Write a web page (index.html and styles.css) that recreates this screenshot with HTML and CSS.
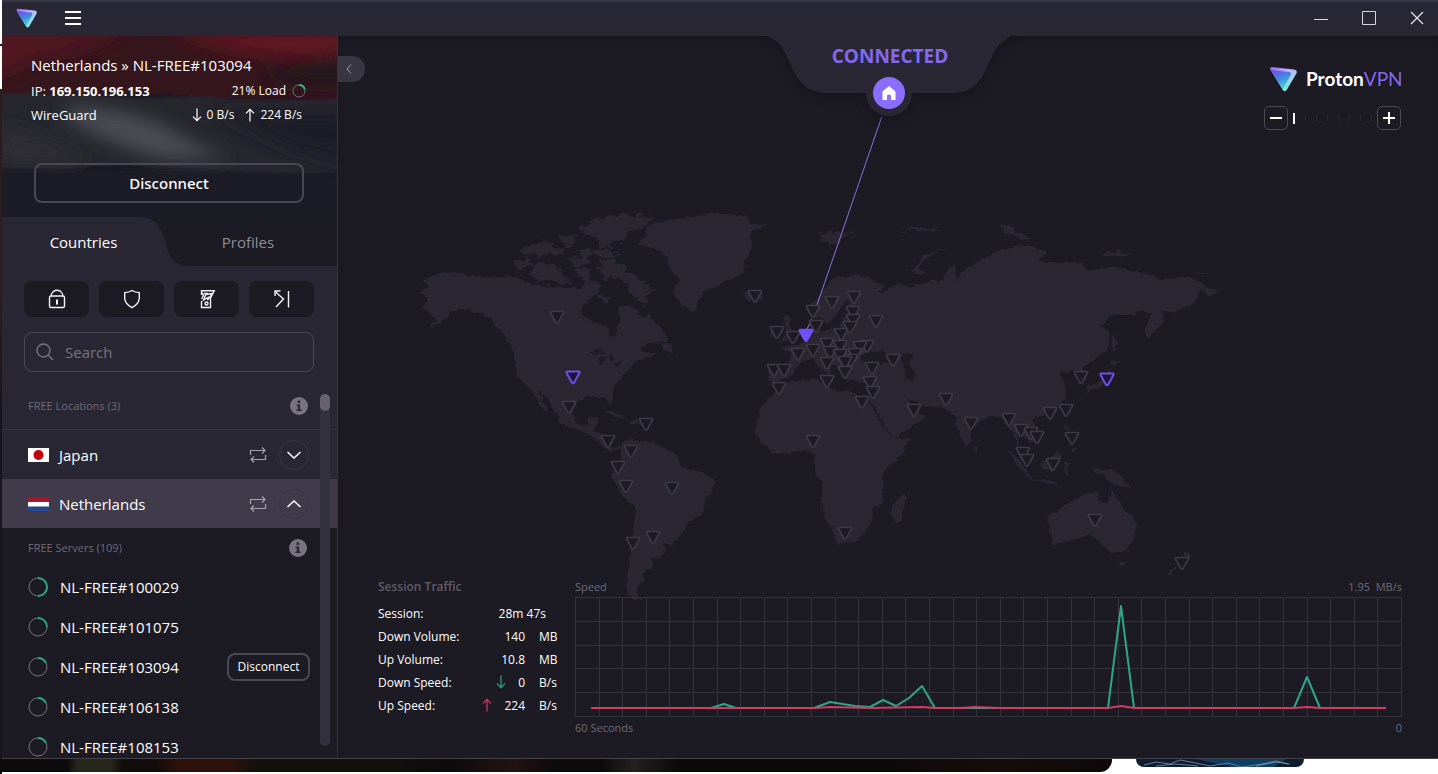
FILE: index.html
```html
<!DOCTYPE html>
<html lang="en">
<head>
<meta charset="utf-8">
<title>Proton VPN</title>
<meta name="viewport" content="width=device-width, initial-scale=1">
<link rel="stylesheet" href="styles.css">
</head>
<body>
<svg class="defs" aria-hidden="true">
  <defs>
    <linearGradient id="brandEdge" x1="0" y1="0" x2="0.6" y2="1">
      <stop offset="0" stop-color="#8a62f2"/><stop offset="0.4" stop-color="#c3b2ff"/><stop offset="1" stop-color="#7df0d8"/>
    </linearGradient>
    <linearGradient id="brandFace" x1="0.2" y1="0" x2="0.6" y2="1">
      <stop offset="0" stop-color="#6a50e8"/><stop offset="0.5" stop-color="#3f8fe0"/><stop offset="1" stop-color="#4fe0cc"/>
    </linearGradient>
    <filter id="soften" x="-20%" y="-20%" width="140%" height="140%"><feGaussianBlur stdDeviation="9"/></filter>
    <filter id="edge"><feGaussianBlur stdDeviation="1"/></filter>
    <filter id="coast" x="-5%" y="-5%" width="110%" height="110%">
      <feTurbulence type="fractalNoise" baseFrequency="0.14" numOctaves="2" seed="4" result="n"/>
      <feDisplacementMap in="SourceGraphic" in2="n" scale="5" xChannelSelector="R" yChannelSelector="G"/>
    </filter>
    <filter id="isles" x="-10%" y="-10%" width="120%" height="120%">
      <feTurbulence type="fractalNoise" baseFrequency="0.11 0.2" numOctaves="2" seed="9" result="n"/>
      <feDisplacementMap in="SourceGraphic" in2="n" scale="14" xChannelSelector="R" yChannelSelector="G"/>
    </filter>
  </defs>
  <symbol id="mark" viewBox="0 0 28 26">
    <path d="M2 1 L24 3.4 Q28 4 26.4 7.4 L17 23.6 Q14.6 27 12.6 23.4 L.6 4 Q-.6 1 2 1Z" fill="url(#brandEdge)"/>
    <path d="M1 4 L19 6 Q22 6.6 20.6 9 L13.4 22.6 Q13 24 12.6 23.4Z" fill="url(#brandFace)"/>
  </symbol>
  <symbol id="swap" viewBox="0 0 18 16">
    <path d="M1.5 8V3.5H16M13 .5l3 3-3 3M16.5 8v4.500H2M5 9.500l-3 3 3 3" fill="none" stroke="currentColor" stroke-width="1.2"/>
  </symbol>
  <symbol id="info" viewBox="0 0 18 18">
    <circle cx="9" cy="9" r="9" fill="#77747f"/>
    <path d="M7.600 3.600h2.600v2.400H7.600zM6.600 7.400h3.600v5h1.400v1.600H6.400v-1.600h1.400V9H6.600z" fill="#292733"/>
  </symbol>
  <symbol id="down" viewBox="0 0 10 14"><path d="M5 .5v12M1 8.700l4 4 4-4" fill="none" stroke="currentColor" stroke-width="1.200"/></symbol>
  <symbol id="up" viewBox="0 0 10 14"><path d="M5 13.500v-12M1 5.300l4-4 4 4" fill="none" stroke="currentColor" stroke-width="1.200"/></symbol>
  <symbol id="pin" viewBox="-9 -9 18 18" overflow="visible">
    <path d="M-5.800 -5.500H5.800Q7 -5.300 6.400 -4L1.200 5.400Q0 7 -1.200 5.400L-6.400 -4Q-7 -5.300 -5.800 -5.500Z"/>
  </symbol>
</svg>

<div class="desktop">
  <div class="window">
    <header class="titlebar">
      <svg class="app-icon" viewBox="0 0 28 26" aria-hidden="true"><use href="#mark"/></svg>
      <button class="menu" aria-label="Menu"><svg viewBox="0 0 16 14"><path d="M0 1h16M0 7h16M0 13h16" stroke="#fff" stroke-width="2"/></svg></button>
      <div class="window-buttons">
        <button aria-label="Minimize"><svg viewBox="0 0 14 14"><path d="M0 8.500h14" stroke="#d8d7dc"/></svg></button>
        <button aria-label="Maximize"><svg viewBox="0 0 14 14"><path d="M.5 .5h13v13h-13z" fill="none" stroke="#d8d7dc"/></svg></button>
        <button aria-label="Close"><svg viewBox="0 0 14 14"><path d="M1 1l12 12M13 1L1 13" stroke="#e8e7ec" stroke-width="1.200"/></svg></button>
      </div>
    </header>

    <div class="content">
      <aside class="sidebar">
        <section class="connection">
          <svg class="flag-art" viewBox="0 0 335 180" preserveAspectRatio="none" aria-hidden="true">
            <rect width="335" height="180" fill="#1c1a24"/>
            <g filter="url(#edge)">
              <path d="M-5 -5H340V62Q270 66 200 60T90 60T-5 58Z" fill="#35151e"/>
              <path d="M-5 58Q40 56 90 60T200 60Q270 66 340 62V136Q250 138 180 131T60 133T-5 130Z" fill="#26262e"/>
              <path d="M-5 130Q40 132 60 133T180 131Q250 138 340 136V185H-5Z" fill="#1b1a25"/>
            </g>
            <g filter="url(#soften)">
              <path d="M-10 -5H130L80 14L30 24L-10 44Z" fill="#521620"/>
              <path d="M160 -5H350V14Q280 26 220 12Z" fill="#651620"/>
              <path d="M260 30L350 20V50L280 48Z" fill="#24131c"/>
              <path d="M60 70Q110 68 160 88Q200 112 230 122H160Q100 105 70 85Z" fill="#4c4c53"/>
              <path d="M210 74L350 74V128L290 112Z" fill="#1f1e28"/>
              <path d="M-5 90L60 108L90 124L-5 124Z" fill="#2d2e35"/>
            </g>
          </svg>
          <div class="connection-body">
            <h1 class="server-name">Netherlands » NL-FREE#103094</h1>
            <div class="info-row"><p>IP: <b>169.150.196.153</b></p>
              <p class="load">21% Load <svg class="ring-small" viewBox="0 0 14 14" aria-hidden="true"><circle cx="7" cy="7" r="6"/><path d="M7 1A6 6 0 0 1 12.800 5.600"/></svg></p></div>
            <div class="info-row second"><p>WireGuard</p>
              <p class="rates"><svg class="arrow" aria-hidden="true"><use href="#down"/></svg><span>0 B/s</span><svg class="arrow" aria-hidden="true"><use href="#up"/></svg><span>224 B/s</span></p></div>
            <button class="disconnect">Disconnect</button>
          </div>
        </section>

        <nav class="tabs">
          <button class="tab active"><svg class="tab-shape" viewBox="0 0 185 49" preserveAspectRatio="none" aria-hidden="true"><path d="M0 0H138C154 0 160 12 163 24C166 38 172 49 185 49H0Z" fill="#292733"/></svg><span>Countries</span></button>
          <button class="tab"><span>Profiles</span></button>
        </nav>

        <div class="filters">
          <button aria-label="Secure Core"><svg viewBox="0 0 20 20"><path d="M4.200 7.500Q4.200 3.800 7 2Q10 .6 13 2Q15.800 3.800 15.800 7.500" /><rect x="2.500" y="7" width="15" height="11.500" rx="1.500"/><path d="M10 10.500v5" stroke-width="2"/></svg></button>
          <button aria-label="NetShield"><svg viewBox="0 0 20 20"><path d="M10 1.500Q13 3.500 17.300 3.600V9Q17 15 10 18.600Q3 15 2.700 9V3.600Q7 3.500 10 1.500Z"/></svg></button>
          <button aria-label="Kill Switch"><svg viewBox="0 0 20 20"><path d="M4.500 6V1.700H17.300L13.500 9V18.500H4.500V12M6.500 4.500H11M4.500 3.500L6.500 6.500L4.500 10"/><path d="M15.500 4.500L9 5.500L6.500 11L11 8.500L10.500 11L14.500 6Z"/><circle cx="9.500" cy="14.500" r="1.500"/></svg></button>
          <button aria-label="Port Forwarding"><svg viewBox="0 0 20 20"><path d="M3 2.500L11.500 10L4 18M3 7V2h5.500M16.500 2v16.500"/></svg></button>
        </div>

        <div class="search">
          <svg viewBox="0 0 18 18" aria-hidden="true"><circle cx="7.500" cy="7.500" r="6.500"/><path d="M12.300 12.300L17 17"/></svg>
          <input type="search" aria-label="Search" placeholder="Search">
        </div>

        <div class="list">
          <div class="list-heading locations"><span>FREE Locations (3)</span><button aria-label="About free locations"><svg><use href="#info"/></svg></button></div>
          <div class="country">
            <svg class="flag" viewBox="0 0 21 14" aria-hidden="true"><path d="M0 0h21v14H0z" fill="#fff"/><circle cx="10.500" cy="7" r="5" fill="#c4000c"/></svg>
            <span>Japan</span><svg class="swap" aria-hidden="true"><use href="#swap"/></svg>
            <button aria-label="Expand Japan"><svg viewBox="0 0 14 8"><path d="M.5 1l6.500 6 6.500-6"/></svg></button>
          </div>
          <div class="country selected">
            <svg class="flag" viewBox="0 0 21 14" aria-hidden="true"><path d="M0 0h21v5H0z" fill="#a8152c"/><path d="M0 5h21v5H0z" fill="#fff"/><path d="M0 9.500h21V14H0z" fill="#27468b"/></svg>
            <span>Netherlands</span><svg class="swap" aria-hidden="true"><use href="#swap"/></svg>
            <button aria-label="Collapse Netherlands"><svg viewBox="0 0 14 8"><path d="M.5 7l6.500-6 6.500 6"/></svg></button>
          </div>
          <div class="servers">
            <div class="list-heading"><span>FREE Servers (109)</span><button aria-label="About free servers"><svg><use href="#info"/></svg></button></div>
            <ul>
              <li><svg class="ring" viewBox="0 0 20 20" aria-hidden="true"><circle cx="10" cy="10" r="9"/><path d="M10 1A9 9 0 0 1 10 19"/></svg>NL-FREE#100029</li>
              <li><svg class="ring" viewBox="0 0 20 20" aria-hidden="true"><circle cx="10" cy="10" r="9"/><path d="M10 1A9 9 0 0 1 19 10"/></svg>NL-FREE#101075</li>
              <li><svg class="ring" viewBox="0 0 20 20" aria-hidden="true"><circle cx="10" cy="10" r="9"/><path d="M10 1A9 9 0 0 1 18 6"/></svg>NL-FREE#103094<button>Disconnect</button></li>
              <li><svg class="ring" viewBox="0 0 20 20" aria-hidden="true"><circle cx="10" cy="10" r="9"/><path d="M10 1A9 9 0 0 1 18 6"/></svg>NL-FREE#106138</li>
              <li><svg class="ring" viewBox="0 0 20 20" aria-hidden="true"><circle cx="10" cy="10" r="9"/><path d="M10 1A9 9 0 0 1 18 6"/></svg>NL-FREE#108153</li>
            </ul>
          </div>
          <div class="scrollbar" aria-hidden="true"><div class="thumb"></div></div>
        </div>
      </aside>

      <main class="stage">
        <svg class="map" viewBox="338 36 1100 722" preserveAspectRatio="xMidYMin meet" role="img" aria-label="World map of servers">
          <g class="land" filter="url(#coast)">
            <path d="M422 280L442 272L467 275L490 278L510 276L527 282L540 286L567 287L580 288L588 280L597 281L602 287L590 300L582 308L583 315L593 322L608 326L610 336L615 336L617 327L620 322L618 307L630 305L637 310L640 317L647 317L648 312L657 325L668 335L667 342L650 343L640 350L656 353L650 358L637 360L630 368L622 378L612 390L613 403L609 404L605 397L587 397L577 403L573 413L577 423L587 425L590 417L598 418L594 430L601 433L603 443L612 448L621 444L620 449L610 452L597 440L583 432L560 423L557 413L547 398L538 391L548 411L545 412L533 393L524 384L517 375L515 362L513 348L500 330L490 318L480 313L463 309L450 313L443 320L427 331L437 320L422 308L428 298L418 292L430 287Z"/>
            <path d="M637 243L647 237L645 227L667 220L693 217L713 213L747 216L750 223L767 224L750 232L752 247L745 260L743 273L730 280L720 285L703 292L693 312L680 303L673 290L680 280L672 272L667 257L657 250Z"/>
            <path d="M620 452L623 443L632 438L637 441L653 442L663 448L677 455L682 467L700 472L716 480L712 492L707 497L702 515L688 522L685 530L672 545L663 544L666 552L660 557L652 559L652 567L643 573L644 580L638 588L637 597L645 600L633 600L626 593L627 577L630 557L632 537L636 507L623 497L612 477L615 467L622 460Z"/>
            <path d="M770 398L778 387L790 382L818 378L823 385L840 392L847 390L857 395L868 400L873 408L883 427L893 438L910 438L903 452L883 473L883 485L884 502L873 508L872 520L865 532L855 542L837 544L832 530L826 522L821 502L823 487L814 467L815 453L805 450L777 455L760 442L755 432L757 418L760 407Z"/>
            <path d="M892 507L903 493L906 498L900 522L895 523L891 515Z"/>
            <path d="M807 310L818 297L833 278L857 275L873 280L885 287L877 292L885 292L897 283L910 287L930 280L943 280L947 268L955 265L957 283L961 272L970 268L977 262L997 252L1023 245L1048 252L1037 262L1060 262L1083 263L1088 270L1117 267L1153 275L1160 280L1190 277L1208 288L1218 291L1210 295L1200 290L1195 303L1173 312L1162 309L1164 320L1148 340L1144 328L1152 314L1143 310L1133 315L1113 315L1100 327L1107 330L1110 338L1107 350L1093 360L1083 368L1088 380L1082 380L1074 370L1060 373L1065 383L1066 398L1060 405L1047 415L1032 418L1038 432L1038 440L1030 442L1022 433L1018 433L1019 447L1026 455L1020 452L1015 437L1008 427L1000 417L992 415L978 423L972 430L970 442L967 447L958 432L955 417L947 408L923 406L907 397L915 413L928 415L913 427L893 438L883 423L873 403L870 400L868 392L870 385L860 381L847 379L843 377L837 367L829 363L832 376L824 373L813 360L805 360L797 367L790 377L773 382L768 379L768 367L787 365L793 353L780 348L802 343L812 335L812 324L818 330L840 328L843 317L862 311L848 309L849 299L842 306L833 320L827 325L820 317L810 318Z"/>
            <path d="M783 317L789 316L790 327L798 340L780 342L787 333ZM771 328L778 327L778 337L770 338ZM742 293L760 290L762 298L750 302Z"/>
            <path d="M912 270L923 255L947 248L930 256L918 267L927 275L914 274Z"/>
            <path d="M1112 333L1117 343L1113 354ZM1109 362L1120 360L1113 366ZM1109 370L1112 378L1103 385L1088 392L1087 387L1100 382ZM974 445L978 451L974 452Z"/>
            <path d="M1007 450L1017 457L1034 480L1027 477ZM1032 479L1047 481L1063 486L1045 484ZM1040 463L1050 458L1057 450L1062 457L1053 471L1043 469ZM1064 463L1072 463L1067 466L1070 476L1065 473ZM1065 424L1069 432L1064 430ZM1072 446L1078 449L1073 453ZM1088 467L1100 470L1113 470L1123 478L1132 488L1113 485L1102 475Z"/>
            <path d="M1048 517L1068 503L1087 493L1098 493L1098 500L1108 503L1112 490L1117 498L1123 507L1137 523L1135 537L1125 552L1110 552L1100 542L1090 535L1053 545L1050 530ZM1118 561L1126 562L1122 568ZM1185 552L1193 556L1180 564L1170 575L1167 573L1185 560Z"/>
            <path d="M605 412L615 412L627 420L615 417ZM630 420L638 419L641 424L631 424ZM663 344L668 342L675 353L663 350Z"/>
          </g>
          <g class="land" filter="url(#isles)">
            <path d="M578 230L590 224L600 219L627 214L653 217L650 225L630 233L617 243L600 248L597 238Z"/>
            <path d="M513 261L527 257L532 263L520 272ZM532 265L550 262L560 267L563 277L572 284L547 282L533 277ZM520 251L543 238L547 244L567 250L553 256L530 254ZM555 236L578 238L576 245L560 243ZM578 250L617 251L619 256L582 257ZM566 257L588 258L586 266L570 264ZM576 267L592 269L588 280L578 279Z"/>
            <path d="M597 266L613 260L630 272L647 283L656 290L647 297L645 306L633 297L630 287L620 277L606 279ZM597 295L613 298L603 302ZM596 258L614 259L606 264Z"/>
            <path d="M818 233L855 232L840 240L830 247ZM897 229L927 227L943 228L920 231ZM998 226L1010 226L1030 238L1017 238ZM1102 253L1117 250L1133 255L1110 258ZM1194 271L1204 271L1202 274Z"/>
          </g>
          <g class="water" filter="url(#coast)">
            <path d="M860 361L866 351L876 352L882 350L890 362L874 365ZM901 358L906 353L914 356L908 362L915 372L914 380L906 379L904 367ZM590 353L598 348L607 354ZM598 358L606 356L602 365L599 364ZM608 355L616 358L611 363ZM612 364L624 361L616 366Z"/>
          </g>
          <path class="link" d="M882 116L817 305M812 319L807 329"/>
          <g class="pins" id="pins"></g>
          <g class="pins free">
            <use href="#pin" x="564" y="368" width="18" height="18"/><use href="#pin" x="1098" y="370" width="18" height="18"/>
          </g>
          <g class="pins current"><use href="#pin" x="797" y="326" width="18" height="18"/></g>
        </svg>

        <div class="status">
          <svg class="status-shape" viewBox="0 0 244 80" aria-hidden="true"><path d="M0 0C14 7 16 15 23 29C31 48 40 57 60 57H98A23 23 0 0 0 144 57H184C203 57 212 48 220 29C227 15 229 7 244 0Z" fill="#292733"/><circle cx="121" cy="57" r="23" fill="#292733"/></svg>
          <p>CONNECTED</p>
          <button aria-label="Home"><svg viewBox="0 0 14 14"><path d="M7 0L13.500 5.500V14H9V9.500Q7 7.500 5 9.500V14H.5V5.500Z" fill="#fff"/></svg></button>
        </div>

        <button class="collapse" aria-label="Collapse sidebar"><svg viewBox="0 0 6 10"><path d="M5 .5L1 5l4 4.500"/></svg></button>

        <div class="tools">
          <div class="brand"><svg viewBox="0 0 28 26" aria-hidden="true"><use href="#mark"/></svg><span><b>Proton</b>VPN</span></div>
          <div class="zoom">
            <button aria-label="Zoom out"><svg viewBox="0 0 12 12"><path d="M0 6h12"/></svg></button>
            <input type="range" min="0" max="7" value="0" aria-label="Map zoom">
            <button aria-label="Zoom in"><svg viewBox="0 0 12 12"><path d="M0 6h12M6 0v12"/></svg></button>
          </div>
        </div>

        <section class="traffic">
          <div class="session">
            <h2>Session Traffic</h2>
            <table>
              <tr><th scope="row">Session:</th><td colspan="2" class="time">28m 47s</td></tr>
              <tr><th scope="row">Down Volume:</th><td>140</td><td class="unit">MB</td></tr>
              <tr><th scope="row">Up Volume:</th><td>10.8</td><td class="unit">MB</td></tr>
              <tr><th scope="row">Down Speed:</th><td><svg class="arrow green"><use href="#down"/></svg>0</td><td class="unit">B/s</td></tr>
              <tr><th scope="row">Up Speed:</th><td><svg class="arrow red"><use href="#up"/></svg>224</td><td class="unit">B/s</td></tr>
            </table>
          </div>
          <div class="chart">
            <div class="axis"><span>Speed</span><span>1.95&nbsp; MB/s</span></div>
            <svg viewBox="0 0 827 120" preserveAspectRatio="none" role="img" aria-label="Speed over the last 60 seconds">
              <g class="grid" id="grid"></g>
              <path class="series green" d="M16 111H136L149 107L161 111H239L255 105L280 109L295 110L308 103L321 109L334 101L347 89L360 111H533L546 9L559 111H719L732 80L745 111H811"/>
              <path class="series red" d="M16 111H240L255 110L295 111L347 110L360 111H385L400 110L425 111H533L546 109L559 111H719L732 110L745 111H811"/>
            </svg>
            <div class="axis"><span>60 Seconds</span><span>0</span></div>
          </div>
        </section>
      </main>
    </div>
  </div>
  <div class="taskstrip" aria-hidden="true">
    <div class="wallpaper"></div>
    <svg class="thumbnail" viewBox="0 0 168 8" preserveAspectRatio="none"><rect width="168" height="8" fill="#0d1b30"/><path d="M60 0h90l-12 8H96z" fill="#0c3f66"/><path d="M8 6l12-3 14 2 10-4 16 3 14 3 18-3 14 4 20-3 14-3 12 3" fill="none" stroke="#6d7c8d"/><path d="M20 7l20-2 22 2M120 7l20-4 14 2" fill="none" stroke="#9aa5ae" stroke-width=".7"/></svg>
  </div>
</div>
<script src="map.js"></script>
</body>
</html>
```

FILE: styles.css
```css
* { box-sizing: border-box; }
body { margin: 0; background: #fff; color: #fff; font-family: "Open Sans", "Noto Sans", sans-serif; font-size: 14px; line-height: 20px; }
h1, h2, p, ul { margin: 0; padding: 0; font-weight: 400; }
button { margin: 0; padding: 0; border: 0; background: none; color: inherit; font: inherit; cursor: pointer; }
svg { display: block; }
.defs { position: absolute; width: 0; height: 0; }

.desktop { display: flex; flex-direction: column; height: 100vh; min-height: 640px; background: linear-gradient(#fff 0 44px, #222 44px 46px, #fff 46px 89px, #2c1c1b 89px 300px, #17141c 420px 100%) left / 2px 100% no-repeat, #fff; }
.window { display: flex; flex: 1; flex-direction: column; min-height: 0; margin-left: 2px; background: #1c1a23; border-bottom: 1px solid #44434c; }
.titlebar { display: flex; flex: none; align-items: center; height: 36px; padding: 0 14px; background: #292733; box-shadow: inset 0 2px #353746; z-index: 2; }
.app-icon { width: 22px; height: 20px; }
.menu { margin-left: 27px; }
.menu svg { width: 16px; height: 14px; }
.window-buttons { display: flex; gap: 34px; margin-left: auto; }
.window-buttons svg { width: 14px; height: 14px; }
.content { display: flex; flex: 1; min-height: 0; }

.sidebar { display: flex; flex: none; flex-direction: column; width: 336px; background: #292733; border-right: 1px solid #35333d; overflow: hidden; }
.connection { position: relative; flex: none; background: #1c1a24; }
.flag-art { position: absolute; inset: 0; width: 100%; height: 100%; }
.connection-body { position: relative; padding: 18px 31px 14px 29px; }
.server-name { font-size: 15px; line-height: 22px; white-space: nowrap; }
.info-row { display: flex; justify-content: space-between; align-items: center; height: 24px; margin-top: 3px; font-size: 13px; }
.info-row.second { margin-top: 0; }
.load { display: flex; align-items: center; gap: 6px; font-size: 12px; }
.ring-small { width: 14px; height: 14px; fill: none; stroke: #69707a; }
.ring-small path { stroke: #2fb08d; stroke-width: 2; }
.rates { display: flex; align-items: center; gap: 5px; padding-right: 4px; font-size: 12px; }
.rates span + .arrow { margin-left: 6px; }
.arrow { width: 10px; height: 14px; }
.disconnect { display: block; width: 270px; height: 40px; margin: 36px 0 0 3px; border: 2px solid #4a4853; border-radius: 8px; font-family: "Noto Sans", sans-serif; font-size: 15px; font-weight: 500; }

.tabs { display: flex; flex: none; height: 49px; background: #1c1a23; }
.tab { position: relative; flex: 1; color: #8f8d97; font-size: 15px; }
.tab span { position: relative; }
.tab.active { flex: none; width: 163px; color: #fff; }
.tab-shape { position: absolute; inset: 0 auto auto 0; width: 185px; height: 49px; }
.tab:last-child { padding-right: 6px; }

.filters { display: grid; flex: none; grid-template-columns: repeat(4, 1fr); gap: 10px; padding: 15px 23px 0 22px; }
.filters button { display: flex; align-items: center; justify-content: center; height: 36px; background: #1c1a23; border-radius: 8px; }
.filters svg { width: 20px; height: 20px; fill: none; stroke: #f2f1f5; stroke-width: 1.4; }
.search { display: flex; flex: none; align-items: center; gap: 11px; height: 40px; margin: 15px 23px 0 22px; padding: 0 11px; border: 1px solid #4a4854; border-radius: 8px; }
.search svg { flex: none; width: 18px; height: 18px; fill: none; stroke: #77757f; stroke-width: 1.4; }
.search input { flex: 1; min-width: 0; padding: 0; border: 0; outline: 0; background: none; color: #fff; font: inherit; font-size: 15px; }
.search input::placeholder { color: #77757f; opacity: 1; }

.list { position: relative; flex: 1; min-height: 0; overflow: hidden; }
.list-heading { display: flex; align-items: center; justify-content: space-between; height: 39px; padding: 0 30px 0 26px; color: #6e6c76; font-size: 11px; }
.list-heading.locations { height: 58px; padding: 10px 29px 0 26px; border-bottom: 1px solid #35333e; }
.list-heading svg { width: 18px; height: 18px; }
.country { display: flex; align-items: center; height: 49px; padding: 0 28px 0 26px; font-size: 15px; }
.country.selected { background: #403a4b; }
.flag { width: 21px; height: 14px; margin-right: 10px; }
.swap { width: 18px; height: 16px; margin-left: auto; margin-right: 12px; color: #a5a2ac; }
.country button { display: flex; align-items: center; justify-content: center; width: 30px; height: 30px; border: 1px solid #3a3743; border-radius: 50%; }
.country button svg { width: 14px; height: 8px; fill: none; stroke: #fff; stroke-width: 1.5; }
.servers { background: #1c1a23; min-height: 300px; }
.servers ul { list-style: none; }
.servers li { display: flex; align-items: center; height: 40px; padding: 0 27px 0 26px; font-size: 15px; }
.ring { width: 20px; height: 20px; margin-right: 12px; fill: none; stroke: #77747f; }
.ring path { stroke: #2fa588; stroke-width: 2; }
.servers li button { width: 83px; height: 28px; margin-left: auto; border: 2px solid #4a4853; border-radius: 8px; font-size: 12px; line-height: 16px; }
.scrollbar { position: absolute; top: 22px; right: 7px; bottom: 12px; width: 10px; border-radius: 5px; background: #34313e; }
.thumb { height: 17px; border-radius: 5px; background: #66636f; }

.stage { position: relative; display: flex; flex: 1; flex-direction: column; min-width: 0; box-shadow: inset 0 6px 8px -4px #14121a; }
.map { position: absolute; inset: 0; width: 100%; height: 100%; }
.land { fill: #292733; }
.water { fill: #1c1a23; }
.link { fill: none; stroke: #8873dc; stroke-width: 1; }
.pins { fill: #1c1a23; stroke: #3c3a44; stroke-width: 1.7; }
.pins.free { fill: #1d1738; stroke: #6e50e8; stroke-width: 2; }
.pins.current { fill: #6f51fa; stroke: #6f51fa; }
.status { position: absolute; top: 0; left: 50%; width: 244px; height: 80px; margin-left: -120px; padding-top: 8px; text-align: center; }
.status-shape { position: absolute; top: 0; left: 0; width: 244px; height: 80px; filter: drop-shadow(0 3px 4px #15131b); }
.status p { position: relative; color: #8468ee; font-size: 19px; font-weight: 700; line-height: 24px; }
.status button { position: absolute; top: 41px; left: 105px; display: flex; align-items: center; justify-content: center; width: 32px; height: 32px; border-radius: 50%; background: #8a6eff; }
.status button svg { width: 14px; height: 14px; }
.collapse { position: absolute; top: 20px; left: 0; display: flex; align-items: center; justify-content: center; width: 27px; height: 26px; padding-right: 5px; border-radius: 0 13px 13px 0; background: #393643; }
.collapse svg { width: 6px; height: 10px; fill: none; stroke: #a19fa9; }
.tools { position: relative; align-self: flex-end; width: 137px; margin: 29px 37px 0 0; }
.brand { display: flex; align-items: center; gap: 8px; height: 28px; padding-left: 6px; color: #8468ee; font-family: Lato, sans-serif; font-size: 19px; white-space: nowrap; }
.brand svg { flex: none; width: 28px; height: 26px; }
.brand b { color: #fff; font-weight: 700; }
.zoom { display: flex; align-items: center; justify-content: space-between; margin-top: 13px; }
.zoom button { display: flex; align-items: center; justify-content: center; width: 24px; height: 24px; border: 1px solid #4b4953; border-radius: 5px; }
.zoom button svg { width: 12px; height: 12px; stroke: #fff; stroke-width: 2; }
.zoom input { width: 80px; height: 12px; margin: 0; appearance: none; background: repeating-linear-gradient(90deg, #2b2932 0 1px, transparent 1px 11px) 1px center / 100% 6px no-repeat; }
.zoom input::-webkit-slider-thumb { appearance: none; width: 2px; height: 11px; background: #fff; }

.traffic { position: relative; display: flex; gap: 16px; margin-top: auto; padding: 0 36px 21px 40px; }
.session { flex: none; width: 181px; font-size: 12px; }
.session h2 { color: #5f5d67; font-size: 12px; font-weight: 600; line-height: 18px; margin-bottom: 6px; }
.session table { width: 100%; border-collapse: collapse; }
.session th { width: 100px; padding: 0; font-weight: 400; line-height: 23px; text-align: left; white-space: nowrap; }
.session td { padding: 0; text-align: right; line-height: 23px; }
.session .time { padding-right: 13px; }
.session .unit { width: 34px; padding-left: 14px; text-align: left; }
.session .arrow { display: inline-block; margin-right: 12px; vertical-align: -2px; }
.session .arrow.green { color: #2fa588; }
.session .arrow.red { color: #d03a5c; }
.chart { flex: 1; min-width: 0; }
.chart > svg { width: 100%; height: 120px; margin: 1px 0 2px; }
.axis { display: flex; justify-content: space-between; color: #6e6c76; font-size: 11px; line-height: 18px; }
.grid path { fill: none; stroke: #33313a; vector-effect: non-scaling-stroke; }
.series { fill: none; stroke-width: 2; stroke-linejoin: round; vector-effect: non-scaling-stroke; }
.series.green { stroke: #2fa588; }
.series.red { stroke: #d23c60; }

.taskstrip { display: flex; flex: none; gap: 24px; height: 15px; }
.wallpaper { width: 77.3%; height: 13px; border-radius: 0 0 12px 0; background: linear-gradient(90deg, #0c0a0a 0 6%, #27261a 7% 10%, #120c0a 11% 14%, #2c120a 16% 21%, #14100c 23% 35%, #0c0a0b 40%, #241210 46%, #0c0a0b 50% 54%, #24201c 57%, #0d0909 61% 80%, #180c07 90%, #0d0808 100%); }
.thumbnail { width: 168px; height: 8px; border-radius: 0 0 8px 8px; }
```

FILE: map.js
```js
const NS = "http://www.w3.org/2000/svg";

const locations = [
  [755,296],[813,311],[832,302],[854,297],[853,312],[853,320],[850,327],[841,334],[876,321],
  [777,332],[793,337],[816,326],[827,344],[840,346],[830,352],[813,350],[798,354],[840,355],
  [867,346],[860,347],[855,354],[851,360],[827,363],[845,362],[845,372],[774,370],[784,370],
  [779,388],[827,381],[872,368],[893,360],[870,382],[873,392],[862,402],[946,399],[914,410],
  [557,317],[569,407],[646,424],[608,441],[631,451],[618,467],[626,486],[672,488],[653,537],
  [633,543],[813,441],[845,533],[971,423],[1009,419],[1021,430],[1031,433],[1037,437],
  [1050,413],[1066,410],[1081,377],[1072,438],[1023,453],[1027,460],[1053,464],[1095,520],[1182,563]
];
const pins = document.getElementById("pins");
for (const [x, y] of locations) {
  const pin = document.createElementNS(NS, "use");
  pin.setAttribute("href", "#pin");
  pin.setAttribute("x", x - 9);
  pin.setAttribute("y", y - 9);
  pin.setAttribute("width", 18);
  pin.setAttribute("height", 18);
  pins.append(pin);
}

const columns = 35;
const rows = 5;
const lines = [];
for (let i = 0; i <= columns; i++) lines.push(`M${Math.round(i * 826 / columns) + 0.5} 0V120`);
for (let i = 0; i <= rows; i++) lines.push(`M0 ${Math.round(i * 119 / rows) + 0.5}H827`);
const grid = document.createElementNS(NS, "path");
grid.setAttribute("d", lines.join(""));
document.getElementById("grid").append(grid);
```
